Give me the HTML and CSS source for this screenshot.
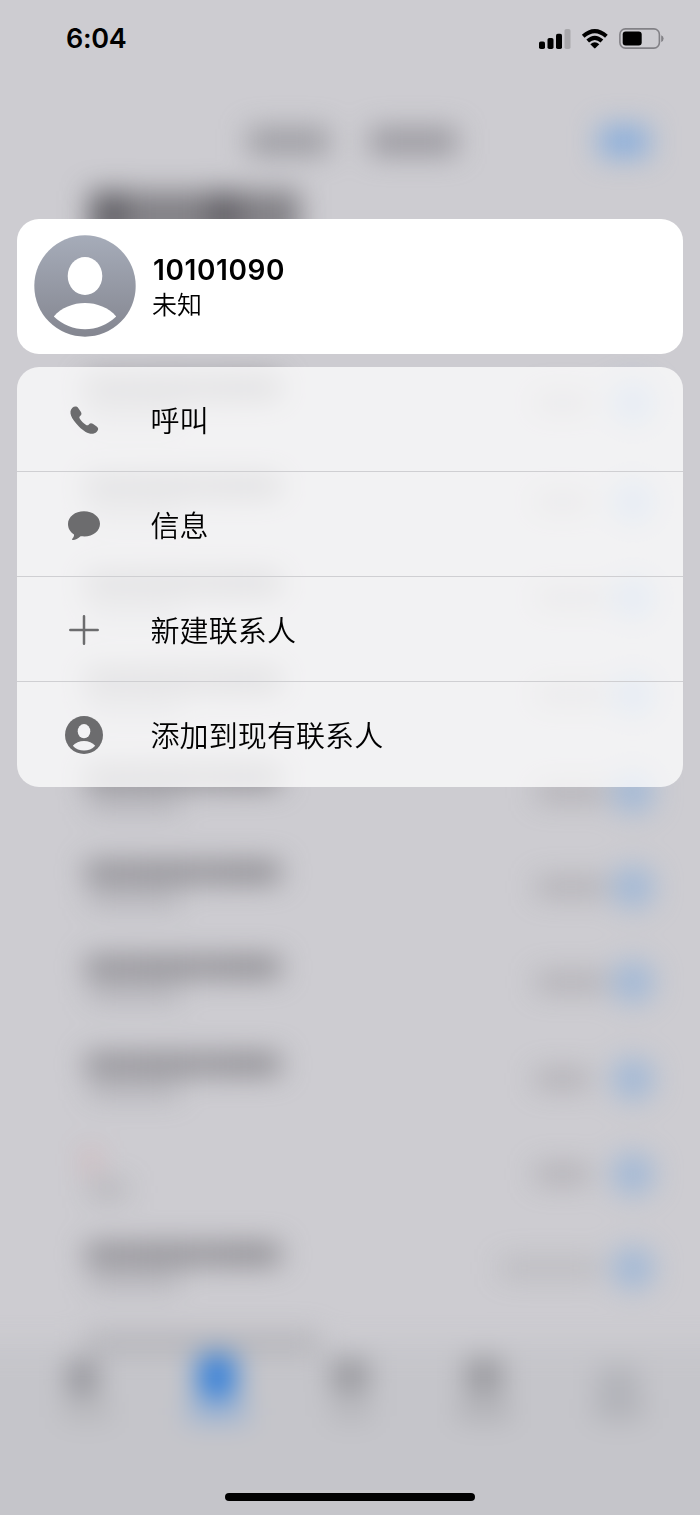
FILE: index.html
```html
<!DOCTYPE html>
<html lang="zh-CN">
<head>
<meta charset="utf-8">
<title>10101090</title>
<link rel="stylesheet" href="styles.css">
</head>
<body>
<div class="screen">
  <svg class="backdrop" width="700" height="1515" viewBox="0 0 700 1515" aria-hidden="true">
    <defs>
      <filter id="soft" filterUnits="userSpaceOnUse" x="-60" y="-60" width="820" height="1640" color-interpolation-filters="sRGB"><feGaussianBlur stdDeviation="14"/></filter>
      <g id="name"><rect x="85" y="-11" width="196" height="22" rx="4" fill="#77767c" opacity=".7"/><rect x="142" y="-10" width="50" height="20" fill="#77767c" opacity=".14"/><rect x="222" y="-10" width="50" height="20" fill="#77767c" opacity=".2"/><rect x="88" y="17" width="92" height="18" fill="#77767c" opacity=".28"/></g>
      <g id="info"><rect x="536" y="-10" width="70" height="20" fill="#85848a" opacity=".38"/><circle cx="633" r="21" fill="#8fb0d8" opacity=".72"/></g>
      <g id="infoShort"><rect x="535" y="-10" width="55" height="20" fill="#85848a" opacity=".38"/><circle cx="633" r="21" fill="#8fb0d8" opacity=".72"/></g>
    </defs>
    <rect width="700" height="1515" fill="#cdccd1"/>
    <g filter="url(#soft)">
      <rect x="-60" y="1346" width="820" height="240" fill="#c5c5ca"/>
      <rect x="248" y="128" width="81" height="27" fill="#85848a" opacity=".68"/>
      <rect x="370" y="128" width="87" height="27" fill="#85848a" opacity=".72"/>
      <rect x="599" y="126" width="50" height="31" fill="#78a6de" opacity=".8"/>
      <rect x="88" y="191" width="212" height="50" fill="#504f54" opacity=".6"/>
      <rect x="95" y="192" width="31" height="50" fill="#504f54" opacity=".65"/>
      <rect x="208" y="192" width="32" height="50" fill="#504f54" opacity=".6"/>
      <use href="#name" y="388"/><use href="#name" y="486"/><use href="#name" y="583"/><use href="#name" y="680"/><use href="#name" y="777"/><use href="#name" y="872"/><use href="#name" y="967"/><use href="#name" y="1064"/><use href="#name" y="1254"/>
      <rect x="86" y="1150" width="10" height="20" fill="#e06b69" opacity=".4"/>
      <rect x="88" y="1180" width="40" height="19" fill="#77767c" opacity=".26"/>
      <use href="#infoShort" y="403"/><use href="#infoShort" y="502"/><use href="#info" y="598"/><use href="#info" y="695"/><use href="#info" y="792"/><use href="#info" y="887"/><use href="#info" y="982"/><use href="#infoShort" y="1079"/><use href="#infoShort" y="1174"/>
      <rect x="500" y="1258" width="100" height="20" fill="#85848a" opacity=".24"/><circle cx="633" cy="1268" r="21" fill="#8fb0d8" opacity=".72"/>
      <rect x="85" y="1332" width="235" height="20" fill="#929197" opacity=".4"/>
      <rect x="68" y="1362" width="29" height="32" fill="#68676c" opacity=".56"/><rect x="62" y="1402" width="50" height="18" fill="#85848a" opacity=".24"/>
      <rect x="198" y="1355" width="38" height="43" rx="8" fill="#2f7dd9"/><rect x="187" y="1402" width="60" height="19" fill="#619be0" opacity=".46"/>
      <rect x="332" y="1360" width="36" height="32" fill="#68676c" opacity=".5"/><rect x="330" y="1402" width="42" height="18" fill="#85848a" opacity=".26"/>
      <rect x="466" y="1359" width="36" height="34" fill="#68676c" opacity=".5"/><rect x="457" y="1402" width="54" height="18" fill="#85848a" opacity=".36"/>
      <rect x="598" y="1367" width="40" height="28" fill="#85898e" opacity=".3"/><rect x="594" y="1397" width="50" height="23" fill="#85898e" opacity=".3"/>
    </g>
  </svg>

  <header class="status">
    <time class="clock">6:04</time>
    <svg class="indicators" width="128" height="24" viewBox="0 0 128 24" aria-hidden="true">
      <rect x="1" y="14.5" width="6" height="7.5" rx="1.8"/><rect x="9.5" y="11" width="6" height="11" rx="1.8"/><rect x="18" y="6.7" width="6" height="15.3" rx="1.8"/><rect x="26.5" y="2" width="6" height="20" rx="1.8" fill="#a9a8ac"/>
      <g fill="none" stroke="#000" stroke-width="4"><path d="M45.2 9.3Q56.8-1.2 68.4 9.3"/><path d="M49.7 14.1Q56.8 7.6 63.9 14.1"/></g>
      <path d="M52.3 17.2Q56.8 13.4 61.3 17.2L57.5 21.1Q56.8 21.8 56.1 21.1Z"/>
      <rect x="81.9" y="1.9" width="39.5" height="19.2" rx="5.5" fill="none" stroke="#828186" stroke-width="1.6"/>
      <rect x="84.7" y="4.6" width="19" height="14" rx="3"/><path d="M123.2 8.2Q125.6 9 125.6 11.5T123.2 14.9Z" fill="#828186"/>
    </svg>
  </header>

  <main class="overlay">
    <section class="card">
      <svg class="avatar" width="102" height="102" viewBox="0 0 102 102" aria-hidden="true">
        <defs><linearGradient id="shade" x2="0" y2="1"><stop stop-color="#a6acb9"/><stop offset="1" stop-color="#848690"/></linearGradient></defs>
        <circle cx="51" cy="51" r="50.7" fill="url(#shade)"/><ellipse cx="51" cy="41" rx="17.3" ry="19" fill="#fff"/>
        <path d="M19.8 81.5C35 63.5 67 63.5 82.2 81.5C64.5 98.5 37.5 98.5 19.8 81.5Z" fill="#fff"/>
      </svg>
      <div class="caller"><h1 class="number">10101090</h1><p class="label">未知</p></div>
    </section>
    <nav class="menu">
      <button class="item"><svg class="icon" width="40" height="40" viewBox="0 0 40 40"><path d="M8.4 7.8C10.1 6 12.9 6 14.2 7.9L16.8 11.8C17.9 13.5 17.6 14.7 16.4 15.8C15.1 16.9 15.1 17.8 16 19C17.7 21.4 19.4 23.1 21.8 24.8C23 25.7 23.9 25.5 24.9 24.4C25.9 23.2 27.3 22.9 28.8 23.8L32.7 26.5C34.7 27.9 34.6 30 32.8 31.7C28.3 36 21.8 33.3 14.9 26.4C7.2 18.6 4.1 12.1 8.4 7.8Z"/></svg><span>呼叫</span></button>
      <button class="item"><svg class="icon" width="40" height="40" viewBox="0 0 40 40"><path d="M20 6.2C28.9 6.2 36 11.7 36 18.7C36 25.9 29.2 31.4 20.4 31.4C18.8 31.4 17.5 31.2 16.6 31.3C14.1 33.8 11 35.1 8.9 35C8 34.9 7.8 34.2 8.5 33.4C9.7 32 10.2 30.7 10 29.4C6.3 27.1 4 23.3 4 18.9C4 11.7 11.1 6.2 20 6.2Z"/></svg><span>信息</span></button>
      <button class="item"><svg class="icon" width="40" height="40" viewBox="0 0 40 40"><path d="M20 6.3V33.7M6.3 20H33.7" fill="none" stroke="#6c6c6e" stroke-width="2.5" stroke-linecap="round"/></svg><span>新建联系人</span></button>
      <button class="item"><svg class="icon" width="40" height="40" viewBox="0 0 40 40"><circle cx="20" cy="20" r="19"/><ellipse cx="20" cy="16.2" rx="6.3" ry="7.1" fill="#f2f2f4"/><path d="M8.8 30.7C13.8 24.3 26.2 24.3 31.2 30.7C25.2 37.2 14.8 37.2 8.8 30.7Z" fill="#f2f2f4"/></svg><span>添加到现有联系人</span></button>
    </nav>
  </main>
  <div class="home-bar"></div>
</div>
</body>
</html>
```

FILE: styles.css
```css
* { box-sizing: border-box; }
body { margin: 0; background: #cdccd1; color: #000; font-family: Inter, "Noto Sans CJK SC", sans-serif; }
.screen { position: relative; display: flex; flex-direction: column; width: 700px; height: 1515px; padding-bottom: 14px; overflow: hidden; isolation: isolate; }
.backdrop { position: absolute; inset: 0; z-index: -1; }
.status { display: flex; align-items: center; justify-content: space-between; height: 77px; padding: 0 34px 0 66px; }
.clock { padding-top: 1px; font-size: 27px; font-weight: 600; line-height: 32px; letter-spacing: -.3px; }
.overlay { display: flex; flex-direction: column; gap: 13.5px; padding: 141.5px 17px 0; }
.card { display: flex; align-items: center; gap: 17.5px; height: 135px; padding: 0 16.5px; border-radius: 22px; background: #fff; }
.avatar { display: block; }
.caller { padding-top: 3px; }
.number { margin: 0; font-size: 28px; font-weight: 600; line-height: 36px; letter-spacing: .6px; }
.label { margin: 0 0 0 -1px; font-size: 25px; line-height: 35px; font-weight: 350; }
.menu { height: 420px; border-radius: 22px; overflow: hidden; background: rgba(255, 255, 255, .74); }
.item { display: flex; align-items: center; gap: 47px; width: 100%; height: 105px; margin: 0; padding: 1px 0 0 46.5px; border: 0; border-bottom: 1px solid #cfcfd2; background: none; color: #000; font: 350 29px/42px Inter, "Noto Sans CJK SC", sans-serif; letter-spacing: .1px; text-align: left; }
.item span { padding-top: 4px; }
.item:last-child { border-bottom: 0; }
.icon { flex: none; fill: #6c6c6e; }
.home-bar { width: 250px; height: 8px; margin: auto auto 0; border-radius: 4px; background: #000; }
```
